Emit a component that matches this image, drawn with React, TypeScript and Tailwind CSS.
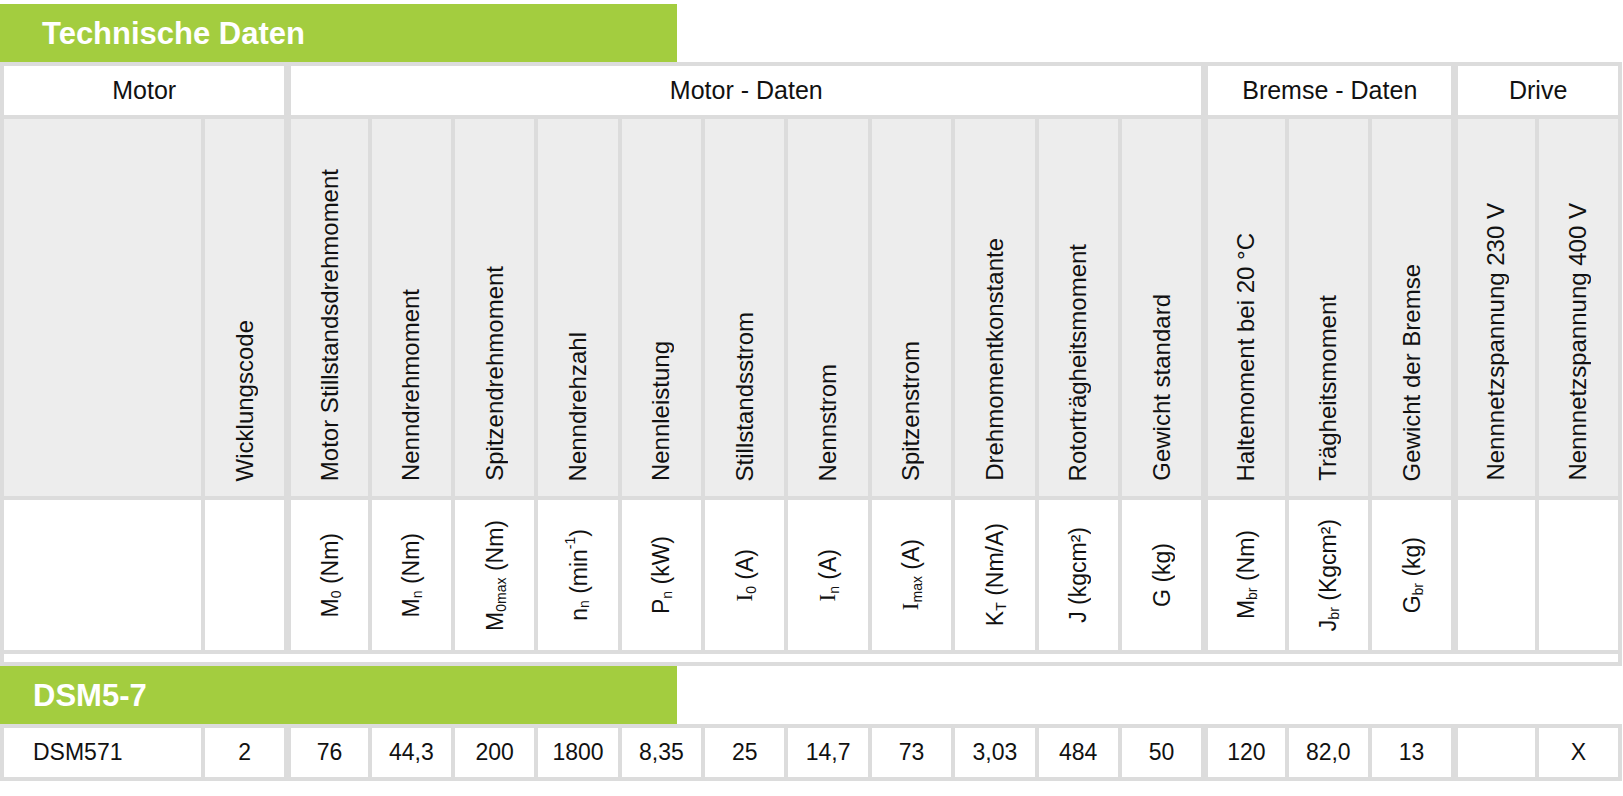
import React from "react";

const Sub = ({ children }: { children: React.ReactNode }) => (
  <sub className="static align-sub text-[14px] leading-none">{children}</sub>
);

const Sup = ({ children }: { children: React.ReactNode }) => (
  <sup className="static align-super text-[14px] leading-none">{children}</sup>
);

const SerifI = () => <span className="font-['Liberation_Serif',serif]">I</span>;

const labels = [
  "",
  "Wicklungscode",
  "Motor Stillstandsdrehmoment",
  "Nenndrehmoment",
  "Spitzendrehmoment",
  "Nenndrehzahl",
  "Nennleistung",
  "Stillstandsstrom",
  "Nennstrom",
  "Spitzenstrom",
  "Drehmomentkonstante",
  "Rotorträgheitsmoment",
  "Gewicht standard",
  "Haltemoment bei 20 °C",
  "Trägheitsmoment",
  "Gewicht der Bremse",
  "Nennnetzspannung 230 V",
  "Nennnetzspannung 400 V",
];

const units: React.ReactNode[] = [
  null,
  null,
  <>M<Sub>0</Sub> (Nm)</>,
  <>M<Sub>n</Sub> (Nm)</>,
  <>M<Sub>0max</Sub> (Nm)</>,
  <>n<Sub>n</Sub> (min<Sup>-1</Sup>)</>,
  <>P<Sub>n</Sub> (kW)</>,
  <><SerifI /><Sub>0</Sub> (A)</>,
  <><SerifI /><Sub>n</Sub> (A)</>,
  <><SerifI /><Sub>max</Sub> (A)</>,
  <>K<Sub>T</Sub> (Nm/A)</>,
  <>J (kgcm²)</>,
  <>G (kg)</>,
  <>M<Sub>br</Sub> (Nm)</>,
  <>J<Sub>br</Sub> (Kgcm²)</>,
  <>G<Sub>br</Sub> (kg)</>,
  null,
  null,
];

const values = ["DSM571", "2", "76", "44,3", "200", "1800", "8,35", "25", "14,7", "73", "3,03", "484", "50", "120", "82,0", "13", "", "X"];

// first column of each group after "Motor" gets a wider separator
const groupStart = (i: number) => i === 2 || i === 13 || i === 16;

const gridCols = "grid grid-cols-[197px_repeat(17,minmax(0,1fr))] gap-1 p-1 bg-[#dcdcdc] w-[1622px]";

function SectionBar({ title, indent }: { title: string; indent: string }) {
  return (
    <div className={`flex items-center h-[58px] w-[677px] bg-[#a3cd3f] ${indent}`}>
      <span className="text-white font-bold text-[31px] leading-none">{title}</span>
    </div>
  );
}

export default function App() {
  return (
    <div className="bg-white min-h-[796px] pt-1 font-['Liberation_Sans',Arial,sans-serif] text-[#111]">
      <SectionBar title="Technische Daten" indent="pl-[42px]" />

      <div className={`${gridCols} grid-rows-[49px_377px_150px_8px]`}>
        {/* group header row */}
        <div className="col-span-2 bg-white flex items-center justify-center text-[25px]">Motor</div>
        <div className="col-span-11 ml-[3px] bg-white flex items-center justify-center text-[25px]">
          Motor - Daten
        </div>
        <div className="col-span-3 ml-[3px] bg-white flex items-center justify-center text-[25px]">
          Bremse - Daten
        </div>
        <div className="col-span-2 ml-[3px] bg-white flex items-center justify-center text-[25px]">Drive</div>

        {/* column names */}
        {labels.map((label, i) => (
          <div
            key={`l${i}`}
            className={`bg-[#ededed] flex flex-col items-center justify-end pb-[15px] ${groupStart(i) ? "ml-[3px]" : ""}`}
          >
            {label && (
              <span className="[writing-mode:vertical-rl] rotate-180 whitespace-nowrap text-[24px] leading-[28px]">
                {label}
              </span>
            )}
          </div>
        ))}

        {/* units */}
        {units.map((unit, i) => (
          <div
            key={`u${i}`}
            className={`bg-white flex flex-col items-center justify-center ${groupStart(i) ? "ml-[3px]" : ""}`}
          >
            {unit && (
              <span className="[writing-mode:vertical-rl] rotate-180 whitespace-nowrap text-[23px] leading-[28px]">
                {unit}
              </span>
            )}
          </div>
        ))}

        <div className="col-span-full bg-white" />
      </div>

      <SectionBar title="DSM5-7" indent="pl-[33px]" />

      <div className={`${gridCols} grid-rows-[49px]`}>
        {values.map((v, i) => (
          <div
            key={`v${i}`}
            className={`bg-white flex items-center text-[23px] ${i === 0 ? "pl-[29px]" : "justify-center"} ${groupStart(i) ? "ml-[3px]" : ""}`}
          >
            {v}
          </div>
        ))}
      </div>
    </div>
  );
}
